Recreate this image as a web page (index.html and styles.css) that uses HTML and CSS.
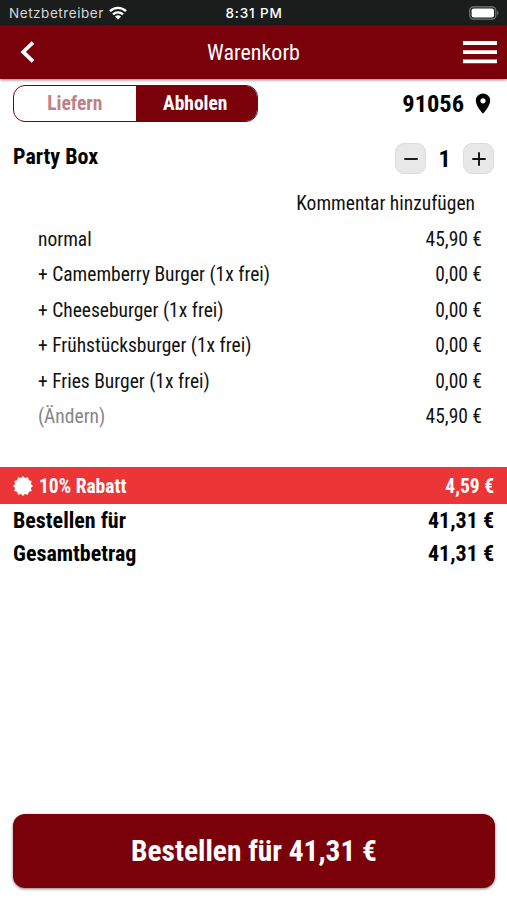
FILE: index.html
```html
<!DOCTYPE html>
<html lang="de">
<head>
<meta charset="utf-8">
<title>Warenkorb</title>
<link rel="stylesheet" href="styles.css">
</head>
<body>
<div class="app">
  <div class="status">
    <div class="carrier"><span>Netzbetreiber</span>
      <svg width="18" height="14" viewBox="0 0 18 14"><g fill="none" stroke="#fff" stroke-width="2.3"><path d="M1 5.2a11.5 11.5 0 0 1 16 0"/><path d="M4 8.3a7.2 7.2 0 0 1 10 0"/></g><path fill="#fff" d="M9 13.5L6 10.6a4.3 4.3 0 0 1 6 0z"/></svg>
    </div>
    <span class="time">8:31 PM</span>
    <svg class="battery" width="31" height="14" viewBox="0 0 31 14"><rect x=".8" y=".8" width="26" height="12.4" rx="3.6" fill="none" stroke="#777b79" stroke-width="1.2"/><rect x="2.6" y="2.4" width="22.4" height="9.2" rx="2" fill="#fff"/><path d="M28.3 4.5q2.4 2.5 0 5z" fill="#777b79"/></svg>
  </div>
  <header class="bar">
    <svg width="15" height="22" viewBox="0 0 15 22"><path d="M13 1.5L3.2 11l9.8 9.3" fill="none" stroke="#fff" stroke-width="3.8"/></svg>
    <h1 class="title">Warenkorb</h1>
    <svg class="menu" width="34" height="23" viewBox="0 0 34 23"><path d="M0 2h34M0 11.2h34M0 20.3h34" stroke="#fff" stroke-width="3.8"/></svg>
  </header>
  <div class="mode">
    <div class="toggle"><span class="off">Liefern</span><span class="on">Abholen</span></div>
    <div class="zip"><span>91056</span>
      <svg width="16" height="21" viewBox="0 0 16 21"><path fill-rule="evenodd" d="M8 .5A7.2 7.2 0 0 0 .8 7.7C.8 13 8 20.6 8 20.6s7.2-7.6 7.2-12.9A7.2 7.2 0 0 0 8 .5zm0 4.7a2.6 2.6 0 1 1 0 5.2 2.6 2.6 0 0 1 0-5.2z"/></svg>
    </div>
  </div>
  <div class="item">
    <h2 class="name">Party Box</h2>
    <div class="stepper">
      <button class="step"><svg width="14" height="14" viewBox="0 0 14 14"><path d="M.3 7h13.4" stroke="#111" stroke-width="1.9"/></svg></button>
      <span class="qty">1</span>
      <button class="step"><svg width="14" height="14" viewBox="0 0 14 14"><path d="M.3 7h13.4M7 .3v13.4" stroke="#111" stroke-width="1.9"/></svg></button>
    </div>
  </div>
  <div class="comment">Kommentar hinzufügen</div>
  <div class="rows">
    <div class="row"><span>normal</span><span>45,90 €</span></div>
    <div class="row"><span>+ Camemberry Burger (1x frei)</span><span>0,00 €</span></div>
    <div class="row"><span>+ Cheeseburger (1x frei)</span><span>0,00 €</span></div>
    <div class="row"><span>+ Frühstücksburger (1x frei)</span><span>0,00 €</span></div>
    <div class="row"><span>+ Fries Burger (1x frei)</span><span>0,00 €</span></div>
    <div class="row"><span class="edit">(Ändern)</span><span>45,90 €</span></div>
  </div>
  <div class="discount">
    <svg width="20" height="20" viewBox="-10 -10 20 20"><path fill="#fff" d="M0-10L1.9-7.9 5-8.7 5.8-5.8 8.7-5 7.9-1.9 10 0 7.9 1.9 8.7 5 5.8 5.8 5 8.7 1.9 7.9 0 10-1.9 7.9-5 8.7-5.8 5.8-8.7 5-7.9 1.9-10 0-7.9-1.9-8.7-5-5.8-5.8-5-8.7-1.9-7.9z"/></svg>
    <span class="label">10% Rabatt</span><span class="saving">4,59 €</span>
  </div>
  <div class="totals">
    <div class="total"><span>Bestellen für</span><span>41,31 €</span></div>
    <div class="total"><span>Gesamtbetrag</span><span>41,31 €</span></div>
  </div>
  <button class="order">Bestellen für 41,31 €</button>
</div>
</body>
</html>
```
FILE: styles.css
```css
* { box-sizing: border-box; }
body { margin: 0; background: #fff; }
svg { display: block; flex: none; }
button { font: inherit; padding: 0; }
.app {
  height: 900px;
  display: flex;
  flex-direction: column;
  font-family: "Roboto Condensed", Roboto, sans-serif;
  font-stretch: 75%;
  font-size: 19.5px;
  color: #111;
  white-space: nowrap;
}
.status {
  height: 25px;
  padding: 1px 7px 0 9px;
  display: grid;
  grid-template-columns: 1fr auto 1fr;
  align-items: center;
  background: #1a1d1c;
  color: #fff;
  font: 13.5px Inter, sans-serif;
}
.carrier { display: flex; align-items: center; gap: 5px; color: #d8d8d8; letter-spacing: .55px; margin-right: 1px; }
.time { font-weight: 500; font-size: 13.5px; letter-spacing: .85px; margin-right: 1px; }
.battery { justify-self: end; }
.bar {
  height: 54px;
  padding: 0 10px 0 20px;
  display: grid;
  grid-template-columns: 34px 1fr 34px;
  align-items: center;
  background: #7a000a;
  box-shadow: 0 1px 3px rgba(0, 0, 0, .5);
}
.title { margin: 0; padding-right: 10px; text-align: center; font-size: 22px; font-weight: 400; color: #fff; }
.menu { justify-self: end; }
.mode {
  margin-top: 6px;
  height: 37px;
  padding: 0 16px 0 13px;
  display: flex;
  justify-content: space-between;
}
.toggle {
  width: 245px;
  display: grid;
  grid-template-columns: 1fr 1fr;
  border: 1px solid #7a000a;
  border-radius: 12px;
  overflow: hidden;
  font-weight: 700;
  line-height: 35px;
  text-align: center;
}
.off { color: #c07f87; }
.on { background: #7a000a; color: #fff; padding-right: 2px; }
.zip { display: flex; align-items: center; gap: 11px; font-size: 24.4px; font-weight: 700; color: #000; }
.item { margin-top: 21px; height: 31px; padding: 0 13px; display: flex; justify-content: space-between; }
.name { margin: 0; font-size: 22px; line-height: 28px; color: #000; }
.stepper { display: flex; align-items: center; }
.step {
  width: 31px;
  height: 31px;
  display: grid;
  place-items: center;
  border: 1px solid #dcdcdc;
  border-radius: 9px;
  background: #e8e8e8;
}
.qty { width: 37px; text-align: center; font-size: 24px; font-weight: 700; color: #000; }
.comment { margin-top: 11px; height: 36px; line-height: 38px; padding-right: 32px; text-align: right; }
.rows { padding: 0 25px 0 38px; }
.row { height: 35.4px; line-height: 38px; display: flex; justify-content: space-between; }
.edit { color: #858585; }
.discount {
  margin-top: 34px;
  height: 37px;
  padding: 0 13px;
  display: flex;
  align-items: center;
  background: #eb3537;
  color: #fff;
  font-weight: 700;
}
.label { flex: 1; margin-left: 6px; }
.label, .saving { padding-top: 1px; }
.total {
  height: 33px;
  padding: 0 13px;
  display: flex;
  justify-content: space-between;
  line-height: 33px;
  font-size: 22px;
  font-weight: 700;
  color: #000;
}
.order {
  margin: auto 12px 12px 13px;
  height: 74px;
  border: 0;
  border-radius: 12px;
  background: #7a000a;
  box-shadow: 0 1px 3px rgba(0, 0, 0, .5);
  color: #fff;
  font-size: 29.4px;
  font-weight: 700;
}
```
